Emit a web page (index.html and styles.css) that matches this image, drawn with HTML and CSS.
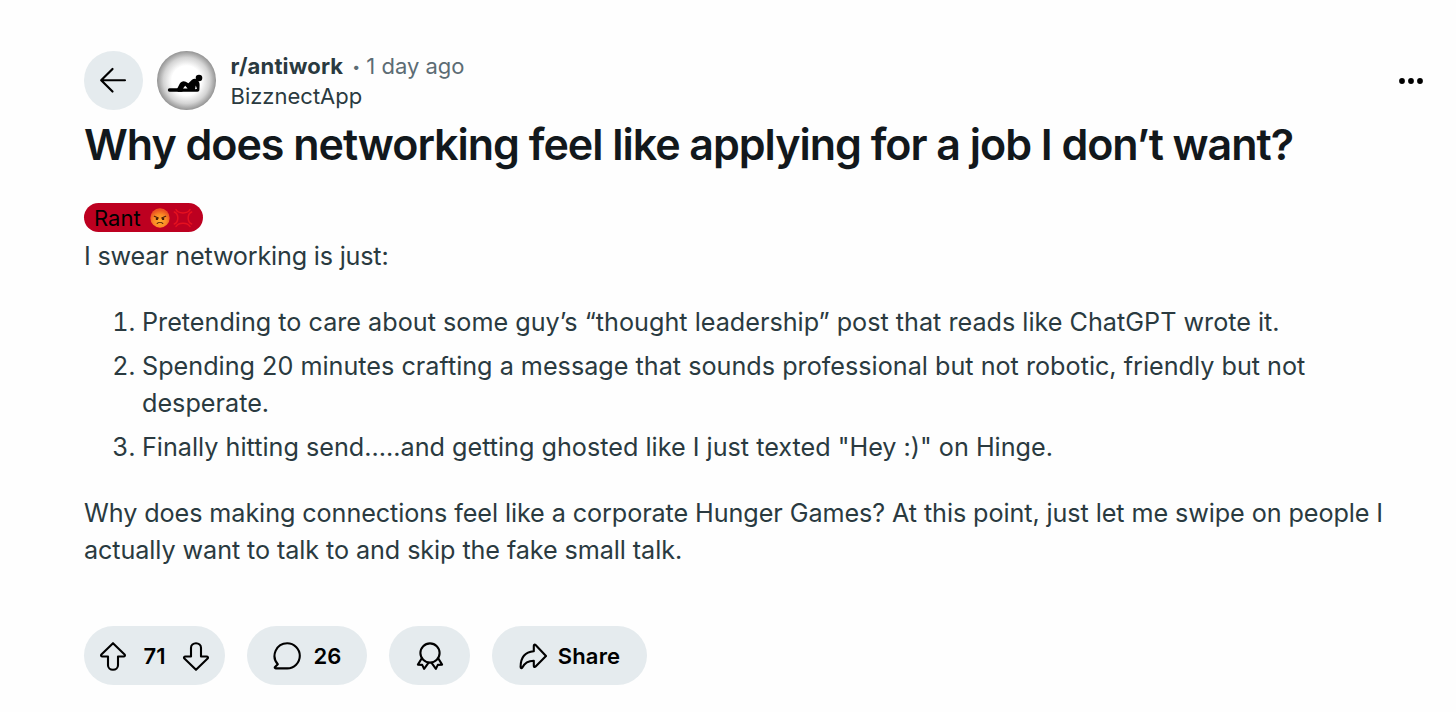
FILE: index.html
```
<!DOCTYPE html>
<html lang="en">
<head>
  <meta charset="UTF-8">
  <title>Why does networking feel like applying for a job I don’t want?</title>
  <link rel="stylesheet" href="styles.css">
</head>
<body>
  <article class="post">
    <header class="post-header">
      <button class="back-button" aria-label="Back">
        <svg viewBox="0 0 32 32" fill="none" stroke="currentColor" stroke-width="1.2" stroke-linecap="round" stroke-linejoin="round">
          <path d="M22.4 16H9.6M15.6 9.8L9.4 16l6.2 6.2"/>
        </svg>
      </button>
      <div class="avatar">
        <svg viewBox="0 0 72 72">
          <circle cx="49" cy="33" r="3.3"/>
          <path d="M19.5 45h12" stroke="#000" stroke-width="3.4" stroke-linecap="round"/>
          <path d="M26.500 45l3.200-6.200c1.200-2.200 3.800-3.200 6-2l2.700 1.400 3.600-3.400c1.500-1.300 3.300-1.400 4.600-.4 2.400 1.400 3.100 3.200 3 5.800l-.2 4.500c0 1.300-.8 2-2 2H28z"/>
          <path d="M33 43.500l2.200-2.800 2.400 2.900zM45 44.200l.8-3.600 1.200 3.200z" fill="#fff"/>
        </svg>
      </div>
      <div class="post-meta">
        <div class="meta-row">
          <span class="subreddit">r/antiwork</span>
          <span class="dot">•</span>
          <span class="time">1 day ago</span>
        </div>
        <div class="author">BizznectApp</div>
      </div>
      <button class="more-button" aria-label="More">
        <svg viewBox="0 0 26 8"><circle cx="4" cy="4" r="2.900"/><circle cx="13" cy="4" r="2.900"/><circle cx="22" cy="4" r="2.900"/></svg>
      </button>
    </header>

    <h1>Why does networking feel like applying for a job I don’t want?</h1>

    <div class="flair">
      <span>Rant</span>
      <svg class="angry" viewBox="0 0 20 20">
        <defs>
          <radialGradient id="face" cx="50%" cy="65%" r="55%">
            <stop offset="0" stop-color="#ffac2e"/>
            <stop offset="0.6" stop-color="#fb8a25"/>
            <stop offset="1" stop-color="#ec5520"/>
          </radialGradient>
        </defs>
        <circle cx="10" cy="10" r="9.700" fill="url(#face)"/>
        <g stroke="#4b1c08" stroke-linecap="round" fill="none">
          <path d="M4.300 8.200l4 1.900M15.700 8.200l-4 1.900" stroke-width="1.100"/>
          <path d="M7.200 15.400c1.500-1.300 4.100-1.300 5.600 0" stroke-width="1.100"/>
        </g>
        <circle cx="6.900" cy="10.900" r="1.200" fill="#4b1c08"/>
        <circle cx="13.100" cy="10.900" r="1.200" fill="#4b1c08"/>
      </svg>
      <svg class="anger" viewBox="0 0 20 20" fill="none" stroke="#e5101f" stroke-width="1.500" stroke-linecap="round">
        <path d="M3 1.500C5 6 15 6 17 1.500M3 18.500C5 14 15 14 17 18.500M1.300 4C6 6 6 14 1.300 16M18.700 4C14 6 14 14 18.700 16"/>
      </svg>
    </div>

    <div class="post-body">
      <p class="intro">I swear networking is just:</p>
      <ol>
        <li>Pretending to care about some guy’s “thought leadership” post that reads like ChatGPT wrote it.</li>
        <li>Spending 20 minutes crafting a message that sounds professional but not robotic, friendly but not desperate.</li>
        <li>Finally hitting send…..and getting ghosted like I just texted "Hey :)" on Hinge.</li>
      </ol>
      <p>Why does making connections feel like a corporate Hunger Games? At this point, just let me swipe on people I actually want to talk to and skip the fake small talk.</p>
    </div>

    <footer class="actions">
      <div class="pill votes">
        <svg class="icon" viewBox="0 0 28 30">
          <path d="M14 2.200L25.600 13.400c.8.900.3 2.100-1 2.100H19V24.200a5 4.600 0 0 1-10 0V15.500H3.400c-1.300 0-1.800-1.200-1-2.100z"/>
        </svg>
        <span class="count">71</span>
        <svg class="icon" viewBox="0 0 28 30">
          <path d="M14 28.800L25.600 17.600c.8-.9.3-2.100-1-2.100H19V6.800a5 4.600 0 0 0-10 0V15.500H3.400c-1.300 0-1.800 1.200-1 2.100z"/>
        </svg>
      </div>
      <button class="pill comments">
        <svg class="icon" viewBox="0 0 28 30">
          <path d="M14.200 2.200a12.600 12.600 0 1 1 0 25.200H2.600c-.8 0-1.100-.8-.6-1.300l2.800-2.900A12.600 12.600 0 0 1 14.200 2.200z"/>
        </svg>
        <span>26</span>
      </button>
      <button class="pill award" aria-label="Award">
        <svg class="icon" viewBox="0 0 28 30">
          <circle cx="14" cy="12" r="9.600"/>
          <path d="M5.800 17.200L1.900 23.600l4.300.3 1.900 4 4.500-6.300M22.200 17.200l3.900 6.400-4.300.3-1.900 4-4.500-6.300"/>
        </svg>
      </button>
      <button class="pill share">
        <svg class="icon" viewBox="0 0 28 30">
          <path d="M14.800 4.800c0-1.100 1-1.500 1.800-.8L27 15 16.600 25.600c-.8.800-1.800.3-1.800-.7v-5.200c-6 0-9.200 2.200-11.300 6.600-.5 1.200-1.900 1-1.900-.3C1.600 16.500 6.200 11 14.800 10.300z"/>
        </svg>
        <span>Share</span>
      </button>
    </footer>
  </article>
</body>
</html>
```
FILE: styles.css
```
:root {
  --pill-bg: #e5ebee;
  --title-color: #12181c;
  --text-color: #2a3a40;
  --secondary-text: #5c6c74;
}

* {
  box-sizing: border-box;
}

body {
  margin: 0;
  background-color: #fefefe;
  color: var(--text-color);
  font-family: Inter, "Liberation Sans", sans-serif;
  font-size: 25.2px;
  line-height: 36.7px;
}

button {
  border: none;
  padding: 0;
  color: #000;
  font-family: inherit;
  cursor: pointer;
}

.post {
  padding: 51px 32px 0 84px;
}

.post-header {
  display: flex;
  align-items: center;
  height: 59px;
}

.back-button,
.avatar {
  width: 58.5px;
  height: 58.5px;
  border-radius: 50%;
  flex: none;
}

.back-button {
  background-color: var(--pill-bg);
  margin-right: 14.5px;
}

.back-button svg {
  display: block;
  width: 100%;
}

.avatar {
  display: flex;
  align-items: center;
  justify-content: center;
  margin-right: 15px;
  background: radial-gradient(circle closest-side, #fff 50%, #d4d4d4 78%, #949494 100%);
}

.avatar svg {
  flex: none;
  width: 72px;
  height: 72px;
}

.post-meta {
  padding-top: 2px;
  font-size: 22px;
  line-height: 29.5px;
}

.meta-row {
  display: flex;
  align-items: center;
}

.subreddit {
  font-weight: 700;
  letter-spacing: 0.15px;
}

.dot {
  width: 23px;
  padding-left: 3px;
  text-align: center;
  font-size: 14px;
  color: var(--secondary-text);
}

.time {
  color: var(--secondary-text);
}

.more-button {
  margin-left: auto;
  background: none;
}

.more-button svg {
  display: block;
  width: 26px;
  height: 8px;
}

h1 {
  margin: 7px 0 0;
  color: var(--title-color);
  font-size: 43px;
  font-weight: 600;
  line-height: 55px;
  letter-spacing: -1.03px;
  white-space: nowrap;
}

/* flair */
.flair {
  display: flex;
  align-items: center;
  width: 119px;
  height: 29px;
  margin-top: 31px;
  padding-left: 10px;
  border-radius: 15px;
  background-color: #bd0020;
  color: #000;
  font-size: 22px;
  line-height: 29px;
}

.flair span {
  padding-top: 1px;
}

.flair svg {
  width: 20px;
  height: 20px;
}

.angry {
  margin-left: 9px;
}

.anger {
  margin-left: 3px;
}

/* post text */
.post-body {
  margin-top: 5.5px;
}

.post-body p {
  margin: 0;
  letter-spacing: -0.09px;
}

.post-body .intro {
  letter-spacing: -0.2px;
}

.post-body ol {
  margin: 29.5px 0;
  padding-left: 58px;
}

.post-body li + li {
  margin-top: 7.5px;
}

/* action bar */
.actions {
  display: flex;
  gap: 22px;
  margin-top: 58px;
}

.pill {
  display: flex;
  align-items: center;
  justify-content: center;
  height: 58.5px;
  border-radius: 30px;
  background-color: var(--pill-bg);
  color: #000;
  font-size: 22px;
  font-weight: 600;
  line-height: 30px;
}

.pill span {
  padding-top: 1px;
}

.icon {
  width: 28px;
  height: 30px;
  fill: none;
  stroke: currentColor;
  stroke-width: 2.1;
  stroke-linejoin: round;
}

.votes {
  width: 141px;
  gap: 15.5px;
}

.count {
  min-width: 24px;
  text-align: center;
}

.comments {
  width: 120px;
  gap: 13px;
}

.award {
  width: 81px;
}

.share {
  width: 155px;
  gap: 11px;
  letter-spacing: 0.2px;
}
```
